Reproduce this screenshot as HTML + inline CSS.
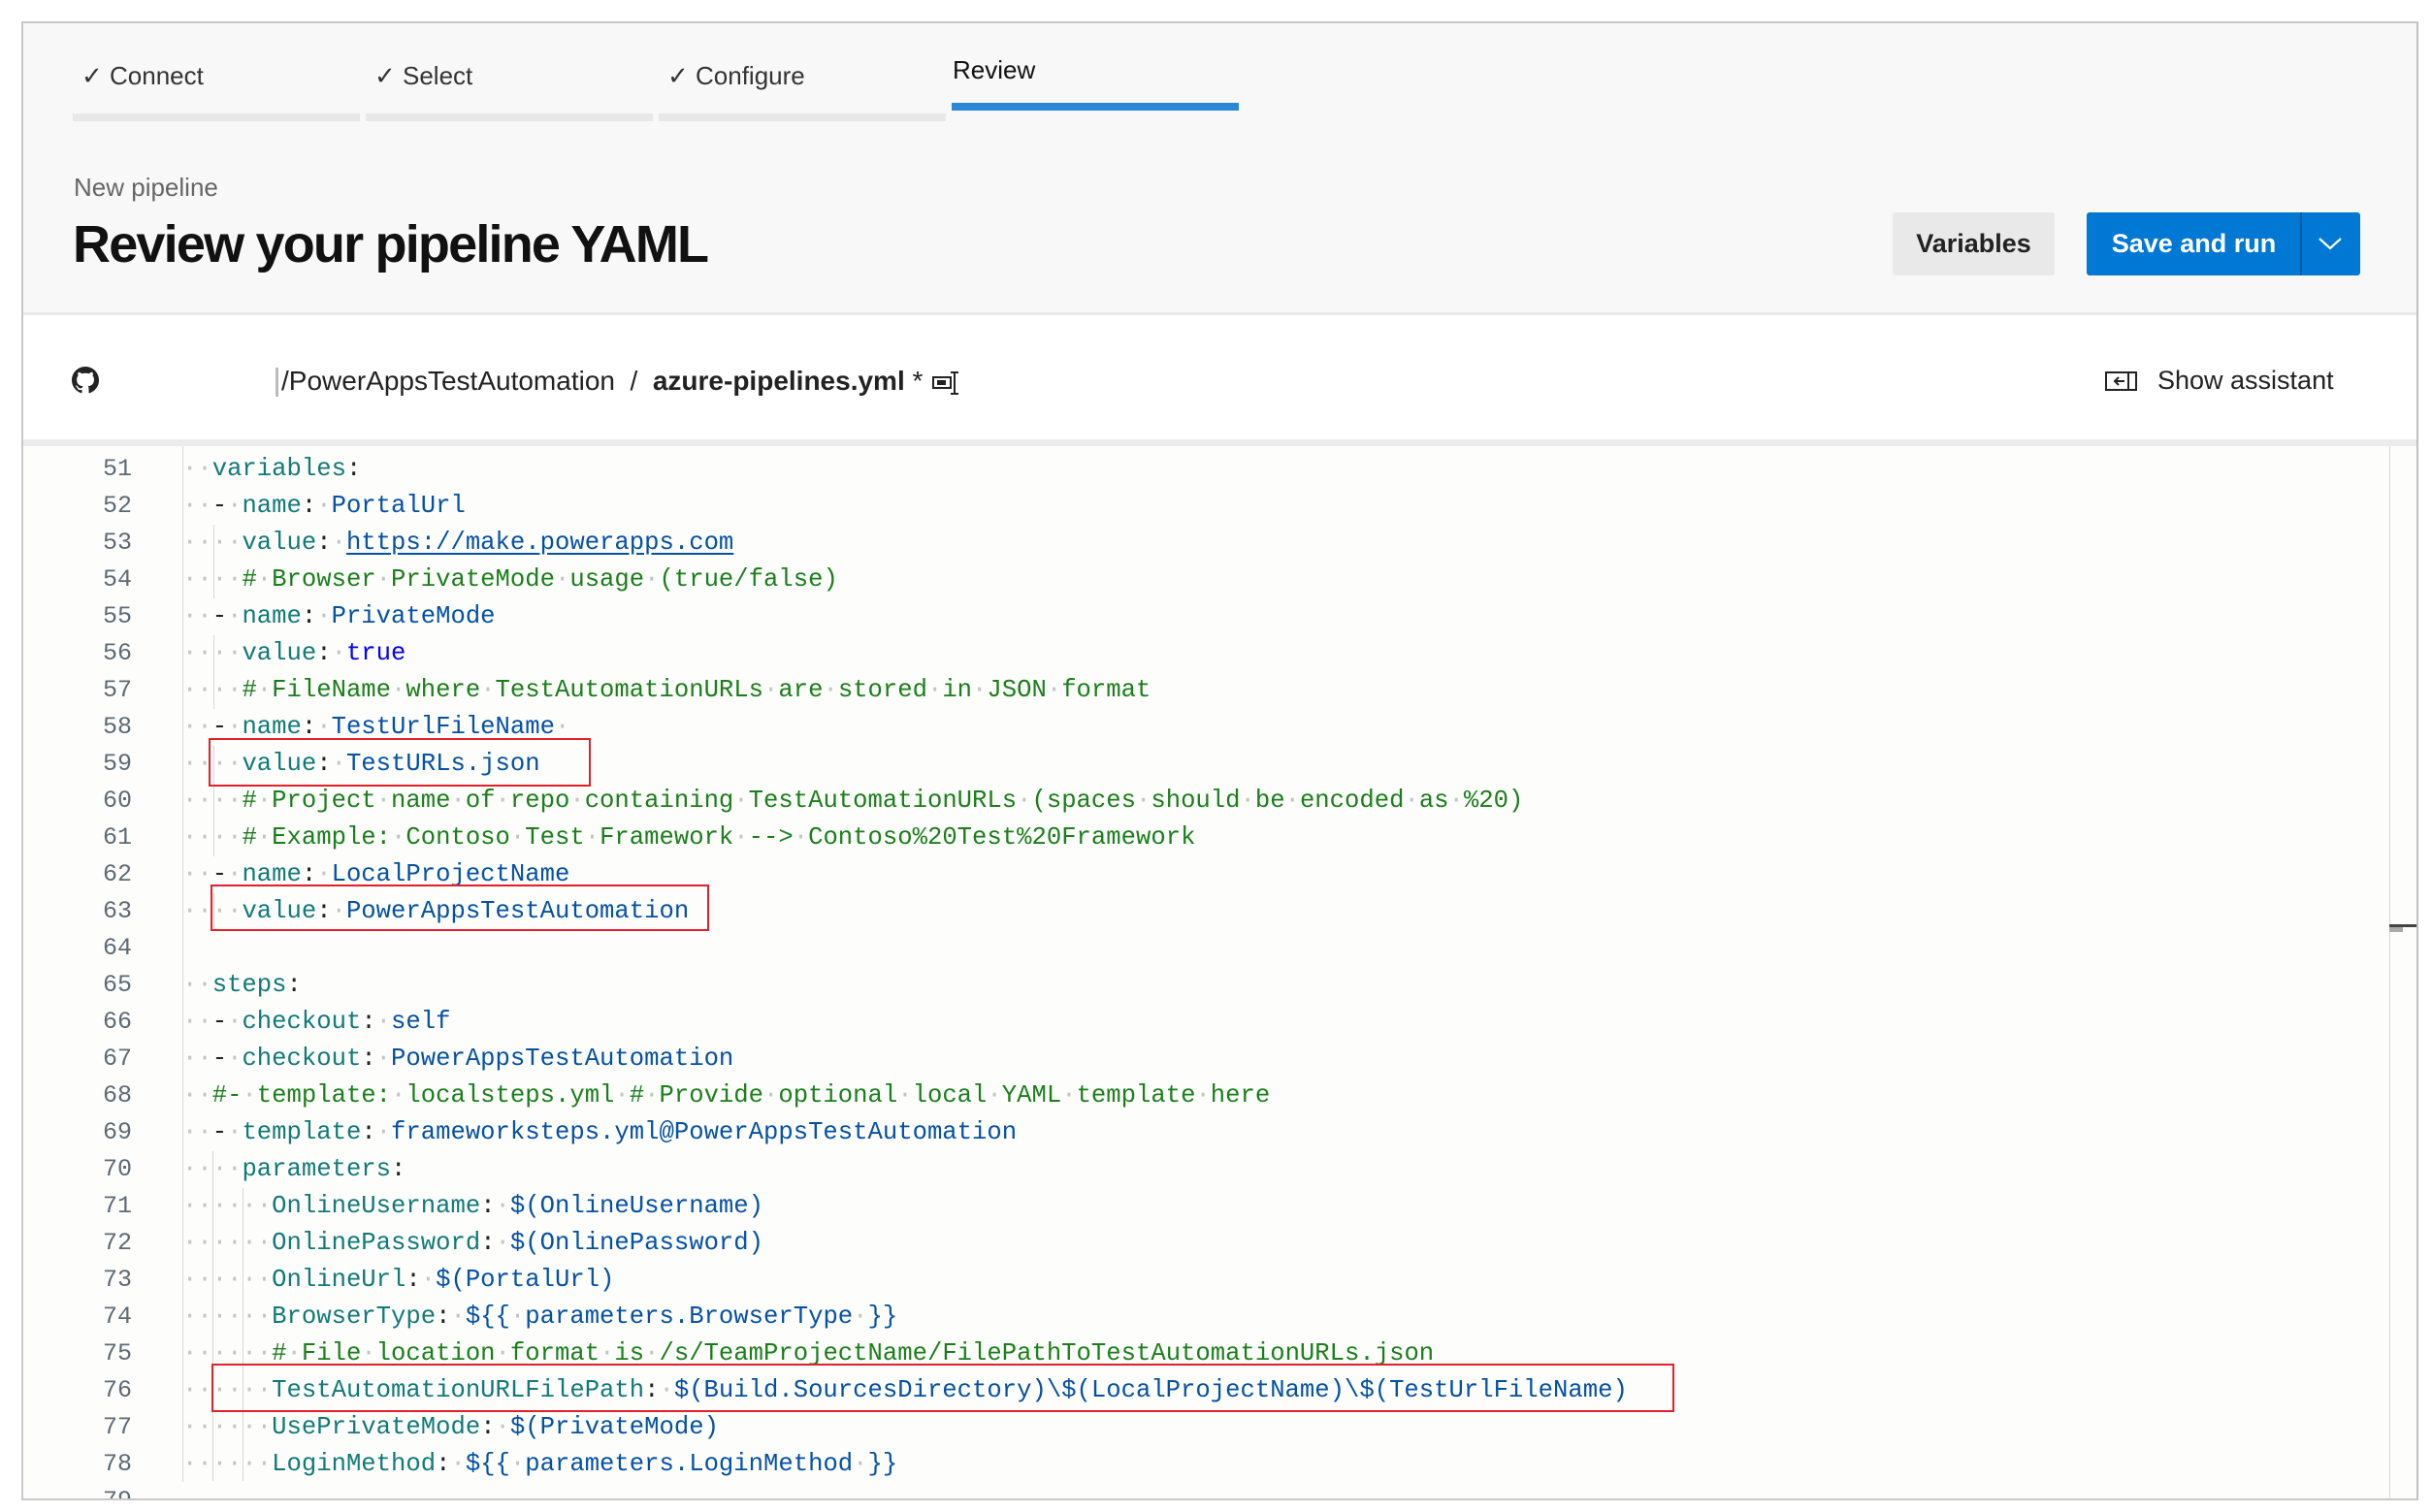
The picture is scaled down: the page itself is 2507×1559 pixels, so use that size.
<!DOCTYPE html>
<html><head><meta charset="utf-8"><style>
*{margin:0;padding:0;box-sizing:border-box}
body{width:2507px;height:1559px;background:#fff;position:relative;overflow:hidden;font-family:"Liberation Sans",sans-serif;color:#222}
.abs{position:absolute}
#frame{left:22px;top:22px;width:2471px;height:1525px;border:2px solid #c8c8c8;border-right-color:#c0c0c0}
#hdr{left:24px;top:24px;width:2467px;height:301px;background:#f8f8f8;border-bottom:3px solid #e8e8e8}
.tab{font-size:26px;color:#333;white-space:nowrap}
.bar{height:8px;background:#e8e8e8}
.code{font-family:"Liberation Mono",monospace;font-size:25.6px;white-space:pre;line-height:38px;height:38px}
.ln{font-family:"Liberation Mono",monospace;font-size:25px;color:#5d6b75;width:60px;text-align:right;left:76px;line-height:38px}
i{font-style:normal;color:#c4c4c4}
k{color:#117a78}
v{color:#0451a5}
c{color:#1a7f1a}
t{color:#0000ff}
u{color:#0451a5;text-decoration:underline;text-decoration-color:#0451a5;text-underline-offset:4px}
.g{width:1px;background:#d8d8d8}
.box{border:2.5px solid #e3202a}
</style></head><body>
<div class="abs" id="frame"></div>
<div class="abs" id="hdr"></div>

<div class="abs tab" style="left:84px;top:63px">✓ Connect</div>
<div class="abs tab" style="left:386px;top:63px">✓ Select</div>
<div class="abs tab" style="left:688px;top:63px">✓ Configure</div>
<div class="abs tab" style="left:982px;top:57px;color:#111">Review</div>
<div class="abs bar" style="left:75px;top:117px;width:296px"></div>
<div class="abs bar" style="left:377px;top:117px;width:296px"></div>
<div class="abs bar" style="left:679px;top:117px;width:296px"></div>
<div class="abs" style="left:981px;top:106px;width:296px;height:8px;background:#2b88d8"></div>

<div class="abs" style="left:76px;top:178px;font-size:26px;color:#666">New pipeline</div>
<div class="abs" style="left:75px;top:221px;font-size:54px;font-weight:bold;letter-spacing:-1.8px;color:#111;white-space:nowrap">Review your pipeline YAML</div>

<div class="abs" style="left:1951px;top:219px;width:167px;height:65px;background:#e9e9e9;border-radius:3px;font-size:27px;font-weight:bold;color:#222;text-align:center;line-height:65px">Variables</div>
<div class="abs" style="left:2151px;top:219px;width:282px;height:65px;background:#0078d4;border-radius:3px"></div>
<div class="abs" style="left:2151px;top:219px;width:221px;height:65px;color:#fff;font-size:27px;font-weight:bold;text-align:center;line-height:65px">Save and run</div>
<div class="abs" style="left:2371px;top:219px;width:2px;height:65px;background:#005a9e"></div>
<svg class="abs" style="left:2389px;top:243px" width="26" height="16" viewBox="0 0 26 16"><path d="M2 3 L13 13 L24 3" stroke="#fff" stroke-width="2.2" fill="none"/></svg>

<svg class="abs" style="left:74px;top:378px" width="28" height="28" viewBox="0 0 16 16"><path fill="#222" d="M8 0C3.58 0 0 3.58 0 8c0 3.540 2.290 6.530 5.470 7.590.4.07.55-.17.55-.38 0-.19-.01-.82-.01-1.49-2.010.37-2.530-.49-2.690-.94-.09-.23-.48-.94-.82-1.13-.28-.15-.68-.52-.01-.53.63-.01 1.080.58 1.230.82.72 1.210 1.870.87 2.330.66.07-.52.28-.87.51-1.070-1.780-.2-3.640-.89-3.640-3.950 0-.87.31-1.590.82-2.150-.08-.2-.36-1.020.08-2.120 0 0 .67-.21 2.200.82.64-.18 1.320-.27 2-.27.68 0 1.360.09 2 .27 1.530-1.040 2.200-.82 2.200-.82.44 1.100.16 1.920.08 2.120.51.56.82 1.270.82 2.150 0 3.070-1.870 3.750-3.650 3.950.29.25.54.73.54 1.480 0 1.070-.01 1.930-.01 2.200 0 .21.15.46.55.38A8.013 8.013 0 0016 8c0-4.420-3.580-8-8-8z"/></svg>
<div class="abs" style="left:284px;top:379px;width:3px;height:30px;background:#bbb"></div>
<div class="abs" style="left:290px;top:377px;font-size:28px;color:#222;white-space:nowrap">/PowerAppsTestAutomation&nbsp;&nbsp;/&nbsp;&nbsp;<span style="font-weight:bold;color:#222">azure-pipelines.yml</span>&nbsp;*</div>
<svg class="abs" style="left:960px;top:381px" width="34" height="28" viewBox="0 0 34 28"><rect x="2" y="8" width="18" height="11" fill="none" stroke="#222" stroke-width="2"/><rect x="6" y="11" width="9" height="5" fill="#222"/><path d="M24 3v22M20 3h8M20 25h8" stroke="#222" stroke-width="2" fill="none"/></svg>
<svg class="abs" style="left:2170px;top:382px" width="34" height="22" viewBox="0 0 34 22"><rect x="1" y="2" width="31" height="18" fill="none" stroke="#222" stroke-width="2"/><path d="M24 2v18M20 11H10M14 7l-4 4 4 4" stroke="#222" stroke-width="2" fill="none"/></svg>
<div class="abs" style="left:2224px;top:377px;font-size:27px;color:#222">Show assistant</div>

<div class="abs" style="left:24px;top:453px;width:2467px;height:1092px;background:#fdfdfc"></div>
<div class="abs" style="left:24px;top:453px;width:2467px;height:7px;background:#ececec"></div>
<div class="abs g" style="left:188px;top:460px;height:1068px"></div>
<div class="abs g" style="left:2463px;top:460px;height:1085px"></div>
<div class="abs" style="left:2463px;top:953px;width:28px;height:3px;background:#444"></div>
<div class="abs" style="left:2463px;top:956px;width:14px;height:5px;background:#aaa"></div>

<div class="abs g" style="left:220px;top:541px;height:76px"></div>
<div class="abs g" style="left:220px;top:655px;height:76px"></div>
<div class="abs g" style="left:220px;top:769px;height:114px"></div>
<div class="abs g" style="left:220px;top:921px;height:38px"></div>
<div class="abs g" style="left:219px;top:1187px;height:340px"></div>
<div class="abs g" style="left:250px;top:1225px;height:302px"></div>

<div class="abs" style="left:0;top:465px">
<div class="ln abs" style="top:0">51</div>
<div class="ln abs" style="top:38px">52</div>
<div class="ln abs" style="top:76px">53</div>
<div class="ln abs" style="top:114px">54</div>
<div class="ln abs" style="top:152px">55</div>
<div class="ln abs" style="top:190px">56</div>
<div class="ln abs" style="top:228px">57</div>
<div class="ln abs" style="top:266px">58</div>
<div class="ln abs" style="top:304px">59</div>
<div class="ln abs" style="top:342px">60</div>
<div class="ln abs" style="top:380px">61</div>
<div class="ln abs" style="top:418px">62</div>
<div class="ln abs" style="top:456px">63</div>
<div class="ln abs" style="top:494px">64</div>
<div class="ln abs" style="top:532px">65</div>
<div class="ln abs" style="top:570px">66</div>
<div class="ln abs" style="top:608px">67</div>
<div class="ln abs" style="top:646px">68</div>
<div class="ln abs" style="top:684px">69</div>
<div class="ln abs" style="top:722px">70</div>
<div class="ln abs" style="top:760px">71</div>
<div class="ln abs" style="top:798px">72</div>
<div class="ln abs" style="top:836px">73</div>
<div class="ln abs" style="top:874px">74</div>
<div class="ln abs" style="top:912px">75</div>
<div class="ln abs" style="top:950px">76</div>
<div class="ln abs" style="top:988px">77</div>
<div class="ln abs" style="top:1026px">78</div>
<div class="ln abs" style="top:1064px;height:16px;overflow:hidden">79</div>
</div>

<div class="abs" style="left:188px;top:465px">
<div class="code"><i>··</i><k>variables</k>:</div>
<div class="code"><i>··</i>-<i>·</i><k>name</k>:<i>·</i><v>PortalUrl</v></div>
<div class="code"><i>····</i><k>value</k>:<i>·</i><u>https://make.powerapps.com</u></div>
<div class="code"><i>····</i><c>#<i>·</i>Browser<i>·</i>PrivateMode<i>·</i>usage<i>·</i>(true/false)</c></div>
<div class="code"><i>··</i>-<i>·</i><k>name</k>:<i>·</i><v>PrivateMode</v></div>
<div class="code"><i>····</i><k>value</k>:<i>·</i><t>true</t></div>
<div class="code"><i>····</i><c>#<i>·</i>FileName<i>·</i>where<i>·</i>TestAutomationURLs<i>·</i>are<i>·</i>stored<i>·</i>in<i>·</i>JSON<i>·</i>format</c></div>
<div class="code"><i>··</i>-<i>·</i><k>name</k>:<i>·</i><v>TestUrlFileName</v><i>·</i></div>
<div class="code"><i>····</i><k>value</k>:<i>·</i><v>TestURLs.json</v></div>
<div class="code"><i>····</i><c>#<i>·</i>Project<i>·</i>name<i>·</i>of<i>·</i>repo<i>·</i>containing<i>·</i>TestAutomationURLs<i>·</i>(spaces<i>·</i>should<i>·</i>be<i>·</i>encoded<i>·</i>as<i>·</i>%20)</c></div>
<div class="code"><i>····</i><c>#<i>·</i>Example:<i>·</i>Contoso<i>·</i>Test<i>·</i>Framework<i>·</i>--&gt;<i>·</i>Contoso%20Test%20Framework</c></div>
<div class="code"><i>··</i>-<i>·</i><k>name</k>:<i>·</i><v>LocalProjectName</v></div>
<div class="code"><i>····</i><k>value</k>:<i>·</i><v>PowerAppsTestAutomation</v></div>
<div class="code"> </div>
<div class="code"><i>··</i><k>steps</k>:</div>
<div class="code"><i>··</i>-<i>·</i><k>checkout</k>:<i>·</i><v>self</v></div>
<div class="code"><i>··</i>-<i>·</i><k>checkout</k>:<i>·</i><v>PowerAppsTestAutomation</v></div>
<div class="code"><i>··</i><c>#-<i>·</i>template:<i>·</i>localsteps.yml<i>·</i>#<i>·</i>Provide<i>·</i>optional<i>·</i>local<i>·</i>YAML<i>·</i>template<i>·</i>here</c></div>
<div class="code"><i>··</i>-<i>·</i><k>template</k>:<i>·</i><v>frameworksteps.yml@PowerAppsTestAutomation</v></div>
<div class="code"><i>····</i><k>parameters</k>:</div>
<div class="code"><i>······</i><k>OnlineUsername</k>:<i>·</i><v>$(OnlineUsername)</v></div>
<div class="code"><i>······</i><k>OnlinePassword</k>:<i>·</i><v>$(OnlinePassword)</v></div>
<div class="code"><i>······</i><k>OnlineUrl</k>:<i>·</i><v>$(PortalUrl)</v></div>
<div class="code"><i>······</i><k>BrowserType</k>:<i>·</i><v>${{<i>·</i>parameters.BrowserType<i>·</i>}}</v></div>
<div class="code"><i>······</i><c>#<i>·</i>File<i>·</i>location<i>·</i>format<i>·</i>is<i>·</i>/s/TeamProjectName/FilePathToTestAutomationURLs.json</c></div>
<div class="code"><i>······</i><k>TestAutomationURLFilePath</k>:<i>·</i><v>$(Build.SourcesDirectory)\$(LocalProjectName)\$(TestUrlFileName)</v></div>
<div class="code"><i>······</i><k>UsePrivateMode</k>:<i>·</i><v>$(PrivateMode)</v></div>
<div class="code"><i>······</i><k>LoginMethod</k>:<i>·</i><v>${{<i>·</i>parameters.LoginMethod<i>·</i>}}</v></div>
</div>

<div class="abs box" style="left:215px;top:761px;width:394px;height:50px"></div>
<div class="abs box" style="left:217px;top:912px;width:514px;height:48px"></div>
<div class="abs box" style="left:218px;top:1406px;width:1508px;height:50px"></div>
</body></html>
